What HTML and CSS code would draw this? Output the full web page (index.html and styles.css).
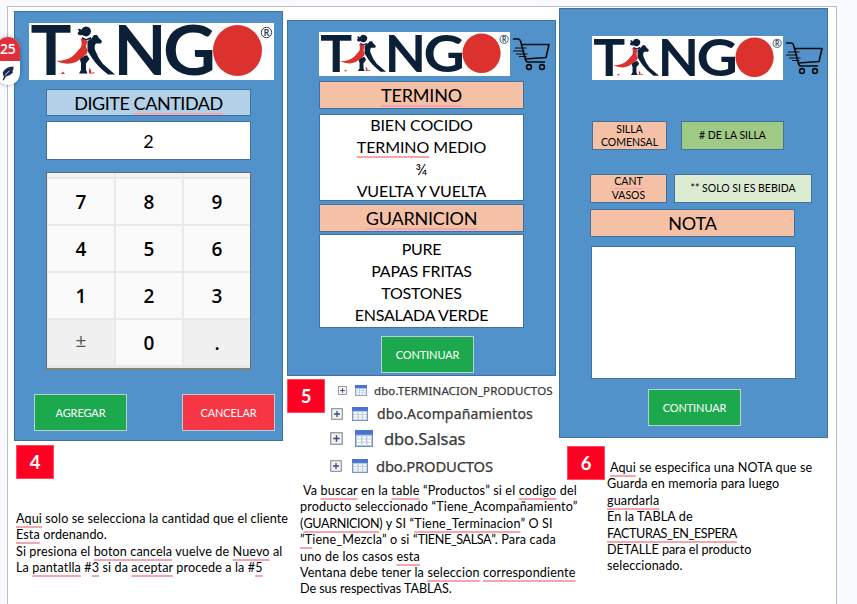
FILE: index.html
```html
<!DOCTYPE html>
<html lang="es">
<head>
<meta charset="utf-8">
<title>Tango</title>
<link rel="stylesheet" href="styles.css">
</head>
<body>
<svg width="0" height="0" class="defs" aria-hidden="true">
  <symbol id="logo" viewBox="0 0 245 57" preserveAspectRatio="none">
    <rect width="245" height="57" fill="#fff"/>
    <g fill="#0b2036" class="logo-type">
      <text x="1.500" y="52" textLength="41" lengthAdjust="spacingAndGlyphs">T</text>
      <text x="84.500" y="52" textLength="53" lengthAdjust="spacingAndGlyphs">N</text>
      <text x="134" y="52" textLength="53" lengthAdjust="spacingAndGlyphs">G</text>
      <path d="M49 6Q51 5 52.500 7Q53 4 57 3.500Q62 4 62 8.500Q61 13 57 13.500L53 12Q49 13 48.500 10L50 8.500Z"/>
      <path d="M58.500 18Q63 16 65 12L68 12L69.500 14.500L73 18L72 20.500L67 20.500Q64.500 23 66.500 28Q69 35 74 41L86 51.500L79 51.500Q68 43 63 35L58.500 28Z"/>
      <path d="M53 14L57 16L62 14L62 16.500L53 17.500Z"/>
      <path d="M50.500 35L58 32L60.500 36L57 40.500L57 47L58.500 50.500L50 50.500L52 47L52 40Z"/>
    </g>
    <g fill="#dc322e">
      <path d="M51.500 15.500L58.500 17.500L57 23.500Q59.500 29 57.500 31Q52 36 47 39Q38 43 27 38Q40 38 46 31L52 24Q53.500 20 51.500 15.500Z"/>
      <path d="M60 45l2 2v2.500h4l-1 1h-5zM32 51l2-2.500 2 2.500z"/>
      <ellipse cx="208.500" cy="27.500" rx="24.500" ry="25.500"/>
    </g>
    <circle cx="237.500" cy="9.500" r="5.200" fill="none" stroke="#26394c" stroke-width="1"/>
    <text x="234.800" y="12.800" class="logo-reg" fill="#26394c">R</text>
  </symbol>
  <symbol id="cart" viewBox="0 0 38 34">
    <g fill="none" stroke="#0a0a0a" stroke-width="1.600" stroke-linecap="round" stroke-linejoin="round">
      <path d="M1.500 2H6Q8 2 8.500 4L13.500 22.500Q14 25 16 25H32.500M9.500 7.500H37L34 20.500L13 22"/>
      <path d="M3.500 11H14M1.500 14H12M4.500 17H15M7.500 19.500H14" stroke-width="1.200"/>
      <circle cx="17" cy="30" r="2.400"/><circle cx="30" cy="30" r="2.400"/>
    </g>
  </symbol>
  <symbol id="plus" viewBox="0 0 12 12">
    <rect x=".7" y=".7" width="10.600" height="10.600" fill="#f3f3f3" stroke="#8c8c8c" stroke-width="1.100"/>
    <path d="M3 6h6M6 3v6" stroke="#334b86" stroke-width="1.300"/>
  </symbol>
  <symbol id="table" viewBox="0 0 18 16" preserveAspectRatio="none">
    <rect x=".5" y=".5" width="17" height="15" fill="#bccde4" stroke="#6f8cba"/>
    <rect x="0" y="0" width="18" height="4.500" fill="#4a75cf"/>
    <path d="M2 7h4M7.500 7h3.500M12.500 7H16M2 10h4M7.500 10h3.500M12.500 10H16M2 13h4M7.500 13h3.500M12.500 13H16" stroke="#fff" stroke-width="2"/>
  </symbol>
</svg>

<main class="slide">
  <section class="col col-a">
    <div class="panel panel-a">
      <svg class="logo logo-lg"><use href="#logo"/></svg>
      <div class="box heading blue">DIGITE&nbsp;<span class="sp">CANTIDAD</span></div>
      <div class="box display">2</div>
      <div class="keypad">
        <i></i><i></i><i></i>
        <b>7</b><b>8</b><b>9</b>
        <b>4</b><b>5</b><b>6</b>
        <b>1</b><b>2</b><b>3</b>
        <b class="dim sign">±</b><b>0</b><b class="dim">.</b>
      </div>
      <div class="actions">
        <div class="btn">AGREGAR</div>
        <div class="btn red">CANCELAR</div>
      </div>
    </div>
    <div class="num num-a">4</div>
    <div class="note note-a">
      <p><span class="sp">Aqui</span> solo se selecciona la cantidad que el cliente</p>
      <p><span class="sp">Esta</span> ordenando.</p>
      <p>Si presiona el <span class="sp">boton cancela</span> vuelve de <span class="sp">Nuevo</span> al</p>
      <p>La <span class="sp">pantatlla</span> #<span class="sp">3</span> si da <span class="sp">aceptar</span> procede a la #<span class="sp">5</span></p>
    </div>
  </section>

  <section class="col col-b">
    <div class="panel panel-b">
      <div class="brand"><svg class="logo"><use href="#logo"/></svg><svg class="cart"><use href="#cart"/></svg></div>
      <div class="box heading peach"><span class="sp">TERMINO</span></div>
      <div class="box list list-1"><p>BIEN COCIDO</p><p><span class="sp">TERMINO</span> MEDIO</p><p>¾</p><p>VUELTA Y VUELTA</p></div>
      <div class="box heading peach"><span class="sp">GUARNICION</span></div>
      <div class="box list list-2"><p>PURE</p><p>PAPAS FRITAS</p><p>TOSTONES</p><p>ENSALADA VERDE</p></div>
      <div class="btn">CONTINUAR</div>
    </div>
    <div class="data">
      <div class="num">5</div>
      <div class="tree">
        <div class="row r1"><svg class="p"><use href="#plus"/></svg><svg class="t"><use href="#table"/></svg><span>dbo.TERMINACION_PRODUCTOS</span></div>
        <div class="row r2"><svg class="p"><use href="#plus"/></svg><svg class="t"><use href="#table"/></svg><span>dbo.Acompañamientos</span></div>
        <div class="row r3"><svg class="p"><use href="#plus"/></svg><svg class="t"><use href="#table"/></svg><span>dbo.Salsas</span></div>
        <div class="row r4"><svg class="p"><use href="#plus"/></svg><svg class="t"><use href="#table"/></svg><span>dbo.PRODUCTOS</span></div>
      </div>
    </div>
    <div class="note note-b">
      <p>&nbsp;Va <span class="sp">buscar</span> en la <span class="sp">table</span> “Productos” si el <span class="sp">codigo</span> del</p>
      <p>producto seleccionado “Tiene_Acompañamiento”</p>
      <p>(<span class="sp caps">GUARNICION</span>) y SI “<span class="sp">Tiene_Terminacion</span>” O SI</p>
      <p><span class="sp">”T</span>iene_Mezcla” o si “<span class="caps">TIENE_SALSA</span>”. Para cada</p>
      <p>uno de los casos <span class="sp">esta</span></p>
      <p>Ventana debe tener la <span class="sp">seleccion</span> <span class="sp">correspondiente</span></p>
      <p class="snug">De sus respectivas TABLAS.</p>
    </div>
  </section>

  <section class="col col-c">
    <div class="panel panel-c">
      <div class="brand"><svg class="logo"><use href="#logo"/></svg><svg class="cart"><use href="#cart"/></svg></div>
      <div class="fields f1"><div class="box small peach">SILLA<br>COMENSAL</div><div class="box small green"># DE LA SILLA</div></div>
      <div class="fields f2"><div class="box small peach"><span class="cant">CANT</span>VASOS</div><div class="box small mint">** SOLO SI ES BEBIDA</div></div>
      <div class="box heading peach">NOTA</div>
      <div class="box area"></div>
      <div class="btn">CONTINUAR</div>
    </div>
    <div class="foot">
      <div class="num">6</div>
      <div class="note note-c">
        <p>&nbsp;<span class="sp">Aqui</span> se especifica una NOTA que se</p>
        <p>Guarda en memoria para luego</p>
        <p><span class="sp">guardarla</span></p>
        <p>En la TABLA de</p>
        <p><span class="sp caps">FACTURAS_EN_ESPERA</span></p>
        <p class="snug">DETALLE para el producto</p>
        <p>seleccionado.</p>
      </div>
    </div>
  </section>
</main>

<aside class="tab">
  <div class="tab-count">25</div>
  <svg viewBox="0 0 20 24"><path d="M3.500 19.500L5 15.500Q2 12 6 8.500Q9 5.500 14.500 5.500Q15 8 13.500 10L14 11.500Q11 15 7 15.500L5 19Z" fill="#1d2b4c"/><path d="M6 14.500Q8 11.500 10.500 10" stroke="#fff" stroke-width=".8" fill="none"/></svg>
</aside>
</body>
</html>
```

FILE: styles.css
```css
* { box-sizing: border-box; }
body { margin: 0; padding: 6px 0 0 7px; height: 604px; overflow: hidden; background: #f8faff; font-family: Lato, "Liberation Sans", sans-serif; color: #000; }
p { margin: 0; }
svg { display: block; flex: none; }
.defs { position: absolute; }
.slide { display: flex; width: 830px; height: 610px; padding-left: 6px; background: #fff; border: 1px solid #bcbec2; }
.col { flex: none; width: 269px; }
.col-a { padding-top: 4px; }
.col-b { margin-left: 4px; padding-top: 13px; }
.col-c { margin-left: 3px; padding-top: 1px; }

.panel { display: flex; flex-direction: column; background: #5192cb; border: 1px solid #3f719e; }
.panel-a { height: 430px; padding: 11px 0 0 14px; }
.panel-b { height: 356px; padding: 11px 0 0 31px; }
.panel-c { height: 430px; padding: 27px 0 0 30px; }

.brand { display: flex; gap: 2px; }
.logo { width: 191px; height: 44px; }
.logo-lg { width: 245px; height: 57px; }
.logo-type { font: 700 68px Lato, sans-serif; }
.logo-reg { font: 700 8.500px Lato, sans-serif; }
.cart { width: 38px; height: 34px; margin-top: 5px; }

.box { display: flex; align-items: center; justify-content: center; width: 205px; border: 1px solid #41719c; background: #fff; }
.heading { height: 28px; font-size: 18px; letter-spacing: -.2px; white-space: nowrap; }
.peach { background: #f4c1a6; }
.blue { background: #b3d0e9; letter-spacing: -.45px; }
.green { background: #9fca85; }
.mint { background: #dcecd3; }
.sp { text-decoration: underline #f4a6ae 2px; text-underline-offset: 3px; text-decoration-skip-ink: none; }

.panel-a .box { margin-left: 17px; }
.panel-a .heading { margin-top: 9px; height: 27px; }
.display { margin-top: 5px; height: 39px; font-size: 18px; }
.keypad { display: grid; grid-template: 4px 45px 45px 45px 45px / 66px 66px 66px; gap: 2px; width: 205px; height: 198px; margin: 12px 0 0 17px; padding: 0 0 0 1px; background: #e9e9e9; border: 1px solid #666a70; border-bottom: 2px solid #87817a; }
.keypad i { background: #f2f2f2; }
.keypad b { display: flex; align-items: center; justify-content: center; padding-top: 1px; background: #fafafa; font: 600 19px/1 "Open Sans", sans-serif; }
.keypad .dim { background: #f0f0f0; }
.keypad .sign { font-weight: 400; color: #555; padding: 0 0 4px; }
.actions { display: flex; gap: 55px; margin: 24px 0 0 5px; }

.btn { display: flex; flex: none; align-items: center; justify-content: center; width: 93px; height: 37px; border: 1.500px solid #b9cfd0; background: #1ca84c; color: #fff; font-size: 11px; letter-spacing: -.1px; }
.red { background: #f63644; }

.panel-b .heading { margin-top: 5px; }
.list { flex-direction: column; font-size: 16px; line-height: 22px; letter-spacing: -.1px; }
.list-1 { height: 87px; margin-top: 5px; }
.panel-b .list-1 + .heading { margin-top: 3px; }
.list-2 { height: 94px; margin-top: 2px; padding-top: 1px; letter-spacing: -.25px; }
.panel-b .btn { margin: 8px 0 0 62px; }

.fields { display: flex; }
.small { height: 29px; font-size: 10.500px; line-height: 13.500px; text-align: center; flex-direction: column; padding-top: 1px; }
.cant { height: 14px; border-bottom: 1px solid #f0a0a8; }
.f1 { gap: 14px; margin: 41px 0 0 1px; }
.f1 .peach { width: 75px; }
.f1 .green { width: 103px; }
.f2 { gap: 7px; margin-top: 24px; }
.f2 .peach { width: 77px; }
.f2 .mint { width: 138px; }
.panel-c .brand { margin-left: 2px; }
.panel-c .f1 { margin-left: 2px; }
.panel-c .heading { margin-top: 6px; }
.panel-c .area { margin: 9px 0 0 1px; height: 133px; }
.panel-c .btn { margin: 10px 0 0 58px; }

.num { display: flex; flex: none; align-items: center; justify-content: center; width: 38px; height: 34px; background: #ff0022; border: 1px solid #ff4a60; color: #fff; font-size: 18.500px; font-weight: 700; }
.num-a { margin: 4px 0 0 2px; }
.note { font-size: 12.600px; line-height: 16.400px; letter-spacing: .11px; white-space: nowrap; }
.note .caps { letter-spacing: -.38px; }
.note .snug { letter-spacing: -.06px; }
.note-a { margin: 32px 0 0 2px; }
.note-b { margin: 1px 0 0 13px; letter-spacing: .16px; }
.data { display: flex; height: 103px; margin-top: 3px; }
.tree { flex: none; padding-left: 5px; }
.row { display: flex; align-items: center; white-space: nowrap; color: #3a3a3a; font-family: "Noto Sans", sans-serif; -webkit-text-stroke: .25px #3a3a3a; }
.r1 { height: 22px; padding-left: 8px; font-size: 11.500px; letter-spacing: .1px; }
.r2 { height: 25px; padding-left: 1px; font-size: 14px; letter-spacing: .15px; }
.r3 { height: 25px; font-size: 16.500px; letter-spacing: -.1px; }
.r4 { height: 29px; font-size: 14.800px; letter-spacing: -.2px; }
.r1 .p { width: 9px; height: 9px; margin-right: 8px; } .r1 .t { width: 12px; height: 11px; margin-right: 7px; }
.r2 .p { width: 12px; height: 12px; margin-right: 9px; } .r2 .t { width: 16px; height: 14px; margin-right: 9px; }
.r3 .p { width: 13px; height: 13px; margin-right: 12px; } .r3 .t { width: 18px; height: 17px; margin-right: 11px; }
.r4 .p { width: 12px; height: 12px; margin-right: 10px; } .r4 .t { width: 16px; height: 14px; margin-right: 8px; }
.foot { display: flex; gap: 2px; margin: 8px 0 0 8px; }
.note-c { margin-top: 14px; }

.tab { position: absolute; left: -4px; top: 37px; width: 24px; height: 48px; border-radius: 12px; overflow: hidden; background: #fff; box-shadow: 0 0 4px rgba(0,0,0,.35); }
.tab-count { height: 24px; background: #dd303b; color: #fff; font: 600 14px/24px "Open Sans", sans-serif; padding-left: 4px; letter-spacing: -.2px; }
.tab svg { width: 20px; height: 24px; margin-left: 3px; }
```
